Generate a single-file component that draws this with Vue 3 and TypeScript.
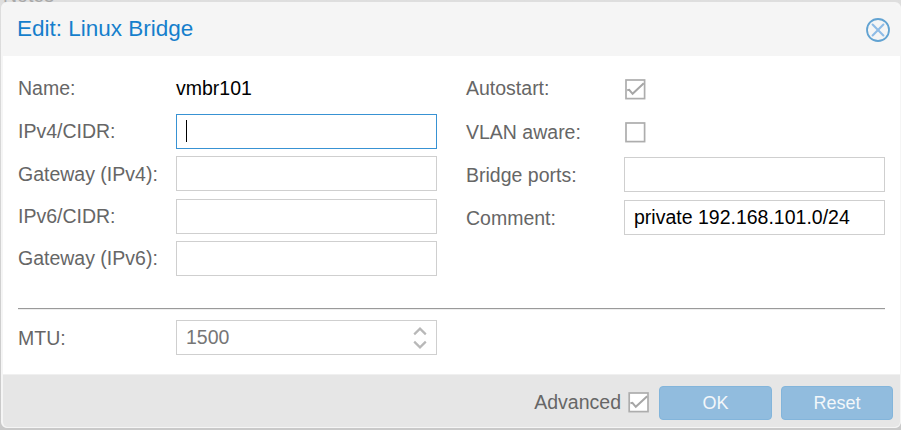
<script setup lang="ts">
import { ref } from 'vue'

interface Field {
  id: string
  label: string
  value: string
  kind: 'display' | 'text' | 'focused' | 'check'
  checked?: boolean
}

const leftFields = ref<Field[]>([
  { id: 'name', label: 'Name:', value: 'vmbr101', kind: 'display' },
  { id: 'cidr', label: 'IPv4/CIDR:', value: '', kind: 'focused' },
  { id: 'gw4', label: 'Gateway (IPv4):', value: '', kind: 'text' },
  { id: 'cidr6', label: 'IPv6/CIDR:', value: '', kind: 'text' },
  { id: 'gw6', label: 'Gateway (IPv6):', value: '', kind: 'text' },
])

const rightFields = ref<Field[]>([
  { id: 'autostart', label: 'Autostart:', value: '', kind: 'check', checked: true },
  { id: 'vlan', label: 'VLAN aware:', value: '', kind: 'check', checked: false },
  { id: 'ports', label: 'Bridge ports:', value: '', kind: 'text' },
  { id: 'comment', label: 'Comment:', value: 'private 192.168.101.0/24', kind: 'text' },
])

const mtu = ref('1500')
const advanced = ref(true)
</script>

<template>
  <div class="page">
    <span class="behind">Notes</span>
    <section class="dialog">
      <header class="head">
        <h1>Edit: Linux Bridge</h1>
        <svg class="close" width="24" height="24" viewBox="0 0 24 24">
          <circle cx="12" cy="12" r="11" fill="none" stroke="#62a3d2" stroke-width="1.8" />
          <path d="M6.6 6.6L17.4 17.4M17.4 6.6L6.6 17.4" fill="none" stroke="#8fbce6" stroke-width="2.1" stroke-linecap="round" />
        </svg>
      </header>

      <main class="body">
        <div class="columns">
          <div class="col left">
            <div v-for="f in leftFields" :key="f.id" class="row" :class="{ first: f.kind === 'display' }">
              <span class="label">{{ f.label }}</span>
              <span v-if="f.kind === 'display'" class="display">{{ f.value }}</span>
              <div v-else class="input" :class="{ focused: f.kind === 'focused' }">
                <i v-if="f.kind === 'focused'" class="caret"></i>
                <span>{{ f.value }}</span>
              </div>
            </div>
          </div>
          <div class="col right">
            <div v-for="(f, i) in rightFields" :key="f.id" class="row" :class="{ first: i === 0 }">
              <span class="label">{{ f.label }}</span>
              <svg v-if="f.kind === 'check'" class="check" width="21" height="21" viewBox="0 0 21 21" @click="f.checked = !f.checked">
                <rect x="1" y="1" width="18.6" height="18.6" fill="#fff" stroke="#adadad" stroke-width="1.7" />
                <path v-if="f.checked" d="M2.2 11.2L4.2 10.8L7.6 14.8L18.8 4.3" fill="none" stroke="#a6a6a6" stroke-width="2" />
              </svg>
              <div v-else class="input"><span>{{ f.value }}</span></div>
            </div>
          </div>
        </div>

        <div class="rule"></div>

        <div class="row mtu">
          <span class="label">MTU:</span>
          <div class="input muted">
            <span>{{ mtu }}</span>
            <svg class="spin" width="14" height="24" viewBox="0 0 14 24">
              <path d="M1.2 8.4L7 2.6L12.8 8.4M1.2 15.6L7 21.4L12.8 15.6" fill="none" stroke="#b8b8b8" stroke-width="2.2" />
            </svg>
          </div>
        </div>
      </main>

      <footer class="foot">
        <span class="adv">Advanced</span>
        <svg class="advcheck" width="21" height="21" viewBox="0 0 21 21" @click="advanced = !advanced">
          <rect x="1.2" y="1" width="18.8" height="18.6" fill="#fff" stroke="#adadad" stroke-width="1.7" />
          <path v-if="advanced" d="M2.4 11.2L4.4 10.8L7.8 14.8L19.2 4.3" fill="none" stroke="#a6a6a6" stroke-width="2" />
        </svg>
        <button class="btn ok" type="button">OK</button>
        <button class="btn reset" type="button">Reset</button>
      </footer>
    </section>
  </div>
</template>

<style>
body {
  margin: 0;
  overflow: hidden;
}
</style>

<style scoped>
.page {
  position: relative;
  box-sizing: border-box;
  width: 901px;
  height: 430px;
  padding: 2px 0 2px 1px;
  overflow: hidden;
  background: linear-gradient(#dedede, #c9c9c9);
  font-family: "Liberation Sans", Arial, sans-serif;
  font-size: 19.5px;
  line-height: 24px;
  color: #666;
}
.behind {
  position: absolute;
  left: 3px;
  top: -15px;
  line-height: 20px;
  color: #a8a8a8;
}
.dialog {
  position: relative;
  box-sizing: border-box;
  display: flex;
  flex-direction: column;
  width: 900px;
  height: 426px;
  border: 2px solid #f5f5f5;
  border-right-width: 1px;
  border-bottom-width: 1px;
  border-radius: 6px;
  overflow: hidden;
  background: #fff;
}
.head {
  display: flex;
  align-items: center;
  justify-content: space-between;
  box-sizing: border-box;
  height: 52px;
  padding: 0 10px 0 14px;
  background: #f5f5f5;
}
h1 {
  margin: 0 0 2px;
  font-size: 22.5px;
  font-weight: 400;
  line-height: 28px;
  color: #157fcc;
}
.body {
  flex: 1;
  box-sizing: border-box;
  padding: 15px 15px 0;
}
.columns {
  display: flex;
  justify-content: space-between;
  box-sizing: border-box;
  height: 237px;
  padding-top: 0.4px;
}
.col {
  display: flex;
  flex-direction: column;
}
.left {
  gap: 7.4px;
}
.right {
  gap: 7.9px;
  width: 419px;
}
.row {
  display: flex;
  align-items: center;
  height: 35px;
}
.label {
  width: 158px;
  white-space: nowrap;
}
.first .label,
.display {
  padding-bottom: 2px;
}
.display {
  color: #000;
}
.check {
  margin: 1px 0 0 1px;
}
.input {
  display: flex;
  align-items: center;
  box-sizing: border-box;
  width: 261px;
  height: 35px;
  padding: 0 9px;
  border: 1px solid #cfcfcf;
  color: #000;
  white-space: nowrap;
}
.input span {
  padding-bottom: 2px;
}
.focused {
  border-color: #3892d3;
}
.caret {
  width: 1px;
  height: 22px;
  background: #000;
}
.muted {
  justify-content: space-between;
  color: #767676;
}
.rule {
  box-sizing: border-box;
  height: 2px;
  border-top: 1px solid #9a9a9a;
  border-bottom: 1px solid #eee;
}
.mtu {
  margin-top: 10px;
}
.foot {
  display: flex;
  align-items: center;
  box-sizing: border-box;
  height: 53px;
  padding: 3px 7px 0 0;
  justify-content: flex-end;
  border-top: 1px solid #f0f0f0;
  background: #e6e6e6;
}
.adv {
  padding-bottom: 2px;
}
.advcheck {
  margin: 0 10px 0 7px;
}
.btn {
  box-sizing: border-box;
  width: 113px;
  height: 34px;
  padding: 0;
  border: 1px solid #83b5db;
  border-radius: 4px;
  background: #91bcde;
  color: #f3f7fa;
  font-family: inherit;
  font-size: 18px;
  line-height: 30px;
}
.reset {
  width: 112px;
  margin-left: 9px;
}
</style>
